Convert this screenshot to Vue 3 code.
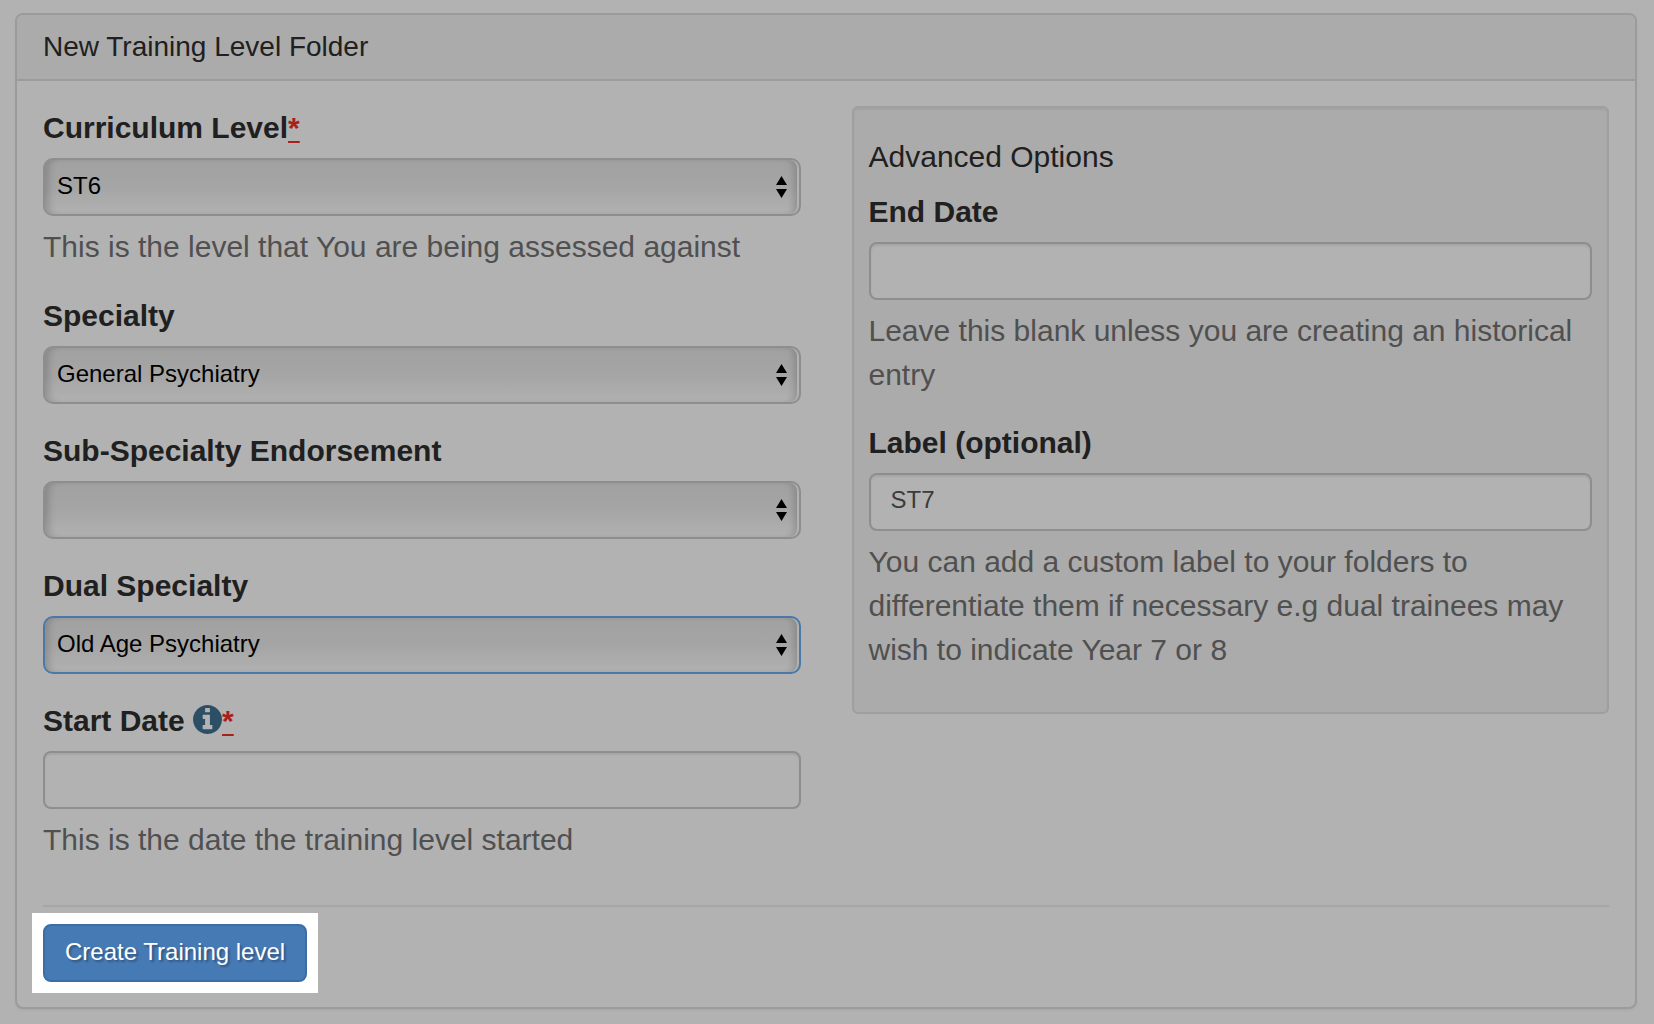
<script setup>
import { ref } from 'vue'

const selects = ref([
  { id: 'level', label: 'Curriculum Level', required: true, value: 'ST6', options: ['ST4', 'ST5', 'ST6'], help: 'This is the level that You are being assessed against' },
  { id: 'specialty', label: 'Specialty', value: 'General Psychiatry', options: ['General Psychiatry', 'Old Age Psychiatry'] },
  { id: 'endorsement', label: 'Sub-Specialty Endorsement', value: '', options: [''] },
  { id: 'dual', label: 'Dual Specialty', value: 'Old Age Psychiatry', options: ['', 'General Psychiatry', 'Old Age Psychiatry'], active: true },
])
const startDate = ref('')
const endDate = ref('')
const customLabel = ref('ST7')
</script>

<template>
  <main class="page">
    <form class="panel" @submit.prevent>
      <h1 class="panel-heading">New Training Level Folder</h1>
      <div class="panel-body">
        <div class="columns">
          <div class="column">
            <div v-for="field in selects" :key="field.id" class="group">
              <label :for="field.id">{{ field.label }}<abbr v-if="field.required" title="required">*</abbr></label>
              <div class="select-wrap">
                <select :id="field.id" v-model="field.value" :class="{ active: field.active }">
                  <option v-for="option in field.options" :key="option" :value="option">{{ option }}</option>
                </select>
                <svg class="arrows" viewBox="0 0 11 22" aria-hidden="true">
                  <path d="M5.500 0 11 9H0zM0 13h11L5.500 22z" />
                </svg>
              </div>
              <p v-if="field.help" class="help">{{ field.help }}</p>
            </div>
            <div class="group">
              <label for="start">Start Date <svg class="info" viewBox="0 128 1536 1536" aria-hidden="true"><path d="M1024 1376v-160q0-14-9-23t-23-9h-96v-512q0-14-9-23t-23-9h-320q-14 0-23 9t-9 23v160q0 14 9 23t23 9h96v320h-96q-14 0-23 9t-9 23v160q0 14 9 23t23 9h448q14 0 23-9t9-23zm-128-896v-160q0-14-9-23t-23-9h-192q-14 0-23 9t-9 23v160q0 14 9 23t23 9h192q14 0 23-9t9-23zm640 416q0 209-103 385.500t-279.500 279.500-385.500 103-385.500-103-279.500-279.500-103-385.500 103-385.500 279.500-279.500 385.500-103 385.500 103 279.500 279.500 103 385.500z" /></svg><abbr title="required">*</abbr></label>
              <input id="start" v-model="startDate" type="text">
              <p class="help">This is the date the training level started</p>
            </div>
          </div>
          <section class="well">
            <h2>Advanced Options</h2>
            <div class="group">
              <label for="end">End Date</label>
              <input id="end" v-model="endDate" type="text">
              <p class="help">Leave this blank unless you are creating an historical entry</p>
            </div>
            <div class="group">
              <label for="custom">Label (optional)</label>
              <input id="custom" v-model="customLabel" type="text">
              <p class="help">You can add a custom label to your folders to differentiate them if necessary e.g dual trainees may wish to indicate Year 7 or 8</p>
            </div>
          </section>
        </div>
        <hr>
        <div class="spotlight">
          <button type="submit">Create Training level</button>
        </div>
      </div>
    </form>
  </main>
</template>

<style>
html {
  background: #b2b2b2;
}
</style>

<style scoped>
.page,
.page * {
  box-sizing: border-box;
}

.page {
  padding: 13px 17px 15px 15px;
  color: #202020;
  font-family: "Liberation Sans", Arial, Helvetica, sans-serif;
  font-size: 30px;
  line-height: 44px;
}

.panel {
  border: 2px solid #9b9b9b;
  border-radius: 8px;
  background: #b2b2b2;
  box-shadow: 0 2px 2px rgba(0, 0, 0, 0.04);
}

.panel-heading {
  margin: 0;
  padding: 10px 26px;
  border-bottom: 2px solid #9b9b9b;
  border-radius: 6px 6px 0 0;
  background: #ababab;
  font-size: 28px;
  font-weight: 400;
}

.panel-body {
  padding: 25px 26px;
}

.columns {
  display: grid;
  grid-template-columns: 1fr 1fr;
  align-items: start;
  gap: 51px;
}

.group {
  margin-bottom: 25px;
}

label {
  display: block;
  margin-bottom: 8px;
  font-weight: 700;
}

abbr {
  color: #a9201a;
  text-decoration: underline;
  text-decoration-thickness: 2px;
  text-underline-offset: 3px;
}

.info {
  width: 29px;
  height: 29px;
  fill: #2c4f66;
  vertical-align: -3px;
}

input,
select {
  display: block;
  width: 100%;
  height: 58px;
  margin: 0;
  border: 2px solid #8e8e8e;
  outline: 0;
  font-family: inherit;
  font-size: 24px;
}

input {
  padding: 0 20px 4px;
  border-radius: 8px;
  background: #b2b2b2;
  box-shadow: inset 0 2px 2px rgba(0, 0, 0, 0.07);
  color: #3b3b3b;
}

.select-wrap {
  position: relative;
}

select {
  appearance: none;
  padding: 0 40px 4px 12px;
  border-radius: 10px;
  background: linear-gradient(#a1a1a1, #a5a5a5 50%, #b1b1b1);
  box-shadow:
    inset -2px 0 0 #b2b2b2,
    inset -9px 0 7px -4px rgba(0, 0, 0, 0.16),
    inset 8px 0 7px -4px rgba(0, 0, 0, 0.16);
  color: #000;
}

select.active {
  border-color: #4c78a8;
}

.arrows {
  position: absolute;
  top: 18px;
  right: 14px;
  width: 11px;
  height: 22px;
  fill: #000;
  pointer-events: none;
}

.help {
  margin: 9px 0 0;
  color: #505050;
}

.well {
  padding: 27px 15px 16px;
  border: 2px solid #9f9f9f;
  border-radius: 6px;
  background: #ababab;
  box-shadow: inset 0 2px 2px rgba(0, 0, 0, 0.05);
}

.well .group {
  margin-bottom: 24px;
}

.well h2 {
  margin: 0 0 11px;
  font-size: 30px;
  font-weight: 400;
}

hr {
  height: 2px;
  margin: 18px 0 17px;
  border: 0;
  background: #a6a6a6;
}

.spotlight {
  width: fit-content;
  background: #fff;
  box-shadow: 0 0 0 11px #fff;
}

button {
  display: block;
  height: 58px;
  padding: 0 20px 3px;
  border: 2px solid #3b6ea3;
  border-radius: 8px;
  background: #467ab4;
  color: #fff;
  font-family: inherit;
  font-size: 24px;
  text-shadow: 2px 2px 2px rgba(0, 0, 0, 0.3);
}
</style>
